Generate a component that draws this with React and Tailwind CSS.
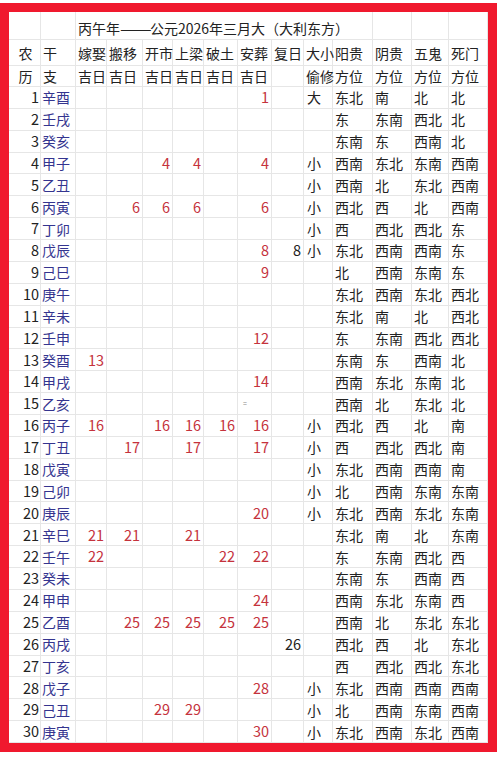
const COLS = 'grid-cols-[32px_35px_31px_36px_30px_31px_34px_34px_32px_29px_40px_39px_37px_39px]';

const rows = [
  ['辛酉', [5], 0, '大', '东北', '南', '北', '北'],
  ['壬戌', [], 0, '', '东', '东南', '西北', '北'],
  ['癸亥', [], 0, '', '东南', '东', '西南', '北'],
  ['甲子', [2, 3, 5], 0, '小', '西南', '东北', '东南', '西南'],
  ['乙丑', [], 0, '小', '西南', '北', '东北', '西南'],
  ['丙寅', [1, 2, 3, 5], 0, '小', '西北', '西', '北', '西南'],
  ['丁卯', [], 0, '小', '西', '西北', '西北', '东'],
  ['戊辰', [5], 1, '小', '东北', '西南', '西南', '东'],
  ['己巳', [5], 0, '', '北', '西南', '东南', '东'],
  ['庚午', [], 0, '', '东北', '西南', '东北', '西北'],
  ['辛未', [], 0, '', '东北', '南', '北', '西北'],
  ['壬申', [5], 0, '', '东', '东南', '西北', '西北'],
  ['癸酉', [0], 0, '', '东南', '东', '西南', '北'],
  ['甲戌', [5], 0, '', '西南', '东北', '东南', '北'],
  ['乙亥', [], 0, '', '西南', '北', '东北', '北'],
  ['丙子', [0, 2, 3, 4, 5], 0, '小', '西北', '西', '北', '南'],
  ['丁丑', [1, 3, 5], 0, '小', '西', '西北', '西北', '南'],
  ['戊寅', [], 0, '小', '东北', '西南', '西南', '南'],
  ['己卯', [], 0, '小', '北', '西南', '东南', '东南'],
  ['庚辰', [5], 0, '小', '东北', '西南', '东北', '东南'],
  ['辛巳', [0, 1, 3], 0, '', '东北', '南', '北', '东南'],
  ['壬午', [0, 4, 5], 0, '', '东', '东南', '西北', '西'],
  ['癸未', [], 0, '', '东南', '东', '西南', '西'],
  ['甲申', [5], 0, '', '西南', '东北', '东南', '西'],
  ['乙酉', [1, 2, 3, 4, 5], 0, '', '西南', '北', '东北', '东北'],
  ['丙戌', [], 1, '', '西北', '西', '北', '东北'],
  ['丁亥', [], 0, '', '西', '西北', '西北', '东北'],
  ['戊子', [5], 0, '小', '东北', '西南', '西南', '西南'],
  ['己丑', [2, 3], 0, '小', '北', '西南', '东南', '西南'],
  ['庚寅', [5], 0, '小', '东北', '西南', '东北', '西南'],
];

const cell = 'border-r border-b border-[#e6e6e6] flex items-center whitespace-nowrap overflow-visible';

const Cell = ({ className = '', children }) => (
  <div className={`${cell} ${className}`}>{children}</div>
);

export default function App() {
  const heads = ['嫁娶', '搬移', '开市', '上梁', '破土', '安葬', '复日', '大小', '阳贵', '阴贵', '五鬼', '死门'];
  const subs = ['吉日', '吉日', '吉日', '吉日', '吉日', '吉日', '', '偷修', '方位', '方位', '方位', '方位'];

  return (
    <div className="w-[500px] h-[759px] bg-white pt-[3px] font-['Noto_Sans_CJK_SC','Noto_Sans',sans-serif] text-[14px] leading-none text-[#222]">
      <div className="w-[497px] h-[749px] border-[9px] border-[#f0192e] bg-white">
        <div className={`grid ${COLS} grid-rows-[28px_26px_21px_repeat(30,1fr)] h-full`}>
          {/* title row */}
          <Cell />
          <Cell />
          <Cell className="col-span-9 items-end pb-[4px] pl-[2px]">
            丙午年
            <span className="inline-block w-[30px]">
              <span className="inline-block origin-left scale-x-[1.35]">——</span>
            </span>
            公元2026年三月大（大利东方）
          </Cell>
          <Cell />
          <Cell />
          <Cell />

          {/* header rows */}
          <Cell className="justify-center pl-[2px]">农</Cell>
          <Cell className="pl-[2px]">干</Cell>
          {heads.map((h, i) => (
            <Cell key={'h' + i} className="pl-[2px]">{h}</Cell>
          ))}
          <Cell className="justify-center pl-[2px]">历</Cell>
          <Cell className="pl-[2px]">支</Cell>
          {subs.map((h, i) => (
            <Cell key={'s' + i} className="pl-[2px]">{h}</Cell>
          ))}

          {/* data rows */}
          {rows.map(([gz, ji, fu, dx, ...dirs], r) => {
            const day = r + 1;
            return [
              <Cell key={day + 'n'} className="justify-end pr-[1px] text-[14.5px]">{day}</Cell>,
              <Cell key={day + 'g'} className="pl-[1px] text-[#34348f]">{gz}</Cell>,
              ...[0, 1, 2, 3, 4, 5].map((c) => (
                <Cell key={day + 'j' + c} className="justify-end pr-[2px] text-[14.5px] text-[#c5323c]">
                  {ji.includes(c) ? day : ''}
                  {day === 15 && c === 5 ? (
                    <span className="mr-auto pl-[5px] text-[7px] text-[#888] order-first">=</span>
                  ) : null}
                </Cell>
              )),
              <Cell key={day + 'f'} className="justify-end pr-[2px] text-[14.5px]">{fu ? day : ''}</Cell>,
              <Cell key={day + 'd'} className="pl-[3px]">{dx}</Cell>,
              ...dirs.map((d, i) => (
                <Cell key={day + 'x' + i} className="pl-[2px]">{d}</Cell>
              )),
            ];
          })}
        </div>
      </div>
    </div>
  );
}
